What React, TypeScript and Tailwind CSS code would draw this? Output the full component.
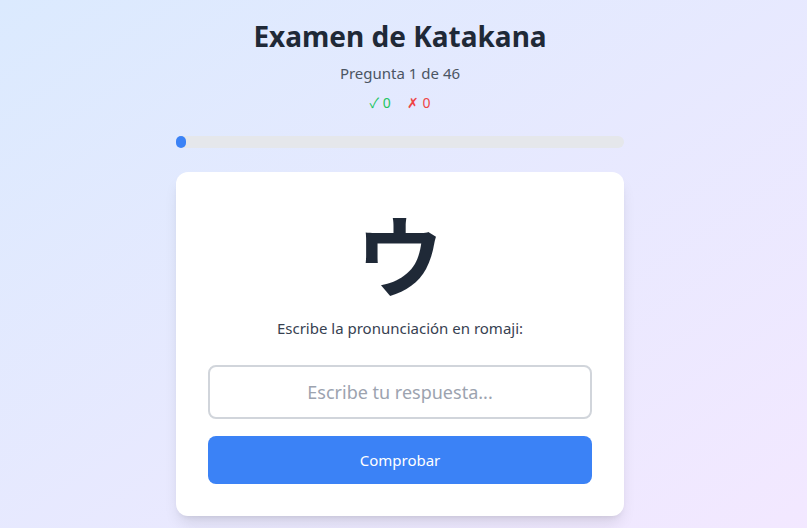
import { useState } from "react";

export default function App() {
  const [answer, setAnswer] = useState("");
  const total = 46;
  const current = 1;

  return (
    <div
      className="min-h-screen bg-gradient-to-br from-[#dbeafe] to-[#f3e8ff] pb-8 pl-4 pr-[23px] pt-[18px]"
      style={{ fontFamily: '"Noto Sans", "Noto Sans CJK JP", sans-serif' }}
    >
      <div className="mx-auto max-w-md">
        <div className="mb-[23px] text-center">
          <h1 className="mb-[7px] text-[28px] font-bold leading-9 text-[#1f2937]">Examen de Katakana</h1>
          <p className="text-[15px] leading-6 text-[#4b5563]">
            Pregunta {current} de {total}
          </p>
          <div className="mt-2 flex justify-center gap-4 text-sm">
            <span className="text-[#22c55e]">✓ 0</span>
            <span className="text-[#ef4444]">✗ 0</span>
          </div>
        </div>

        <div className="mb-6 h-3 w-full rounded-full bg-[#e5e7eb]">
          <div
            className="h-3 rounded-full bg-[#3b82f6]"
            style={{ width: `${(current / total) * 100}%` }}
          />
        </div>

        <div className="rounded-xl bg-white px-8 pb-8 pt-9 shadow-lg">
          <div className="text-center">
            <div
              className="mb-5 text-[88px] font-bold leading-none text-[#1f2937]"
              style={{ fontFamily: '"Noto Sans CJK JP", sans-serif' }}
            >
              ウ
            </div>
            <p className="mb-[25px] text-[15px] leading-6 text-[#374151]">Escribe la pronunciación en romaji:</p>
            <input
              type="text"
              value={answer}
              onChange={(e) => setAnswer(e.target.value)}
              placeholder="Escribe tu respuesta..."
              className="mb-[17px] block h-[54px] w-full rounded-lg border-2 border-[#d1d5db] px-4 text-center text-lg text-[#1f2937] placeholder:text-[#9ca3af] focus:outline-none"
            />
            <button
              type="button"
              className="block h-12 w-full rounded-lg bg-[#3b82f6] text-[15px] text-white"
            >
              Comprobar
            </button>
          </div>
        </div>
      </div>
    </div>
  );
}
